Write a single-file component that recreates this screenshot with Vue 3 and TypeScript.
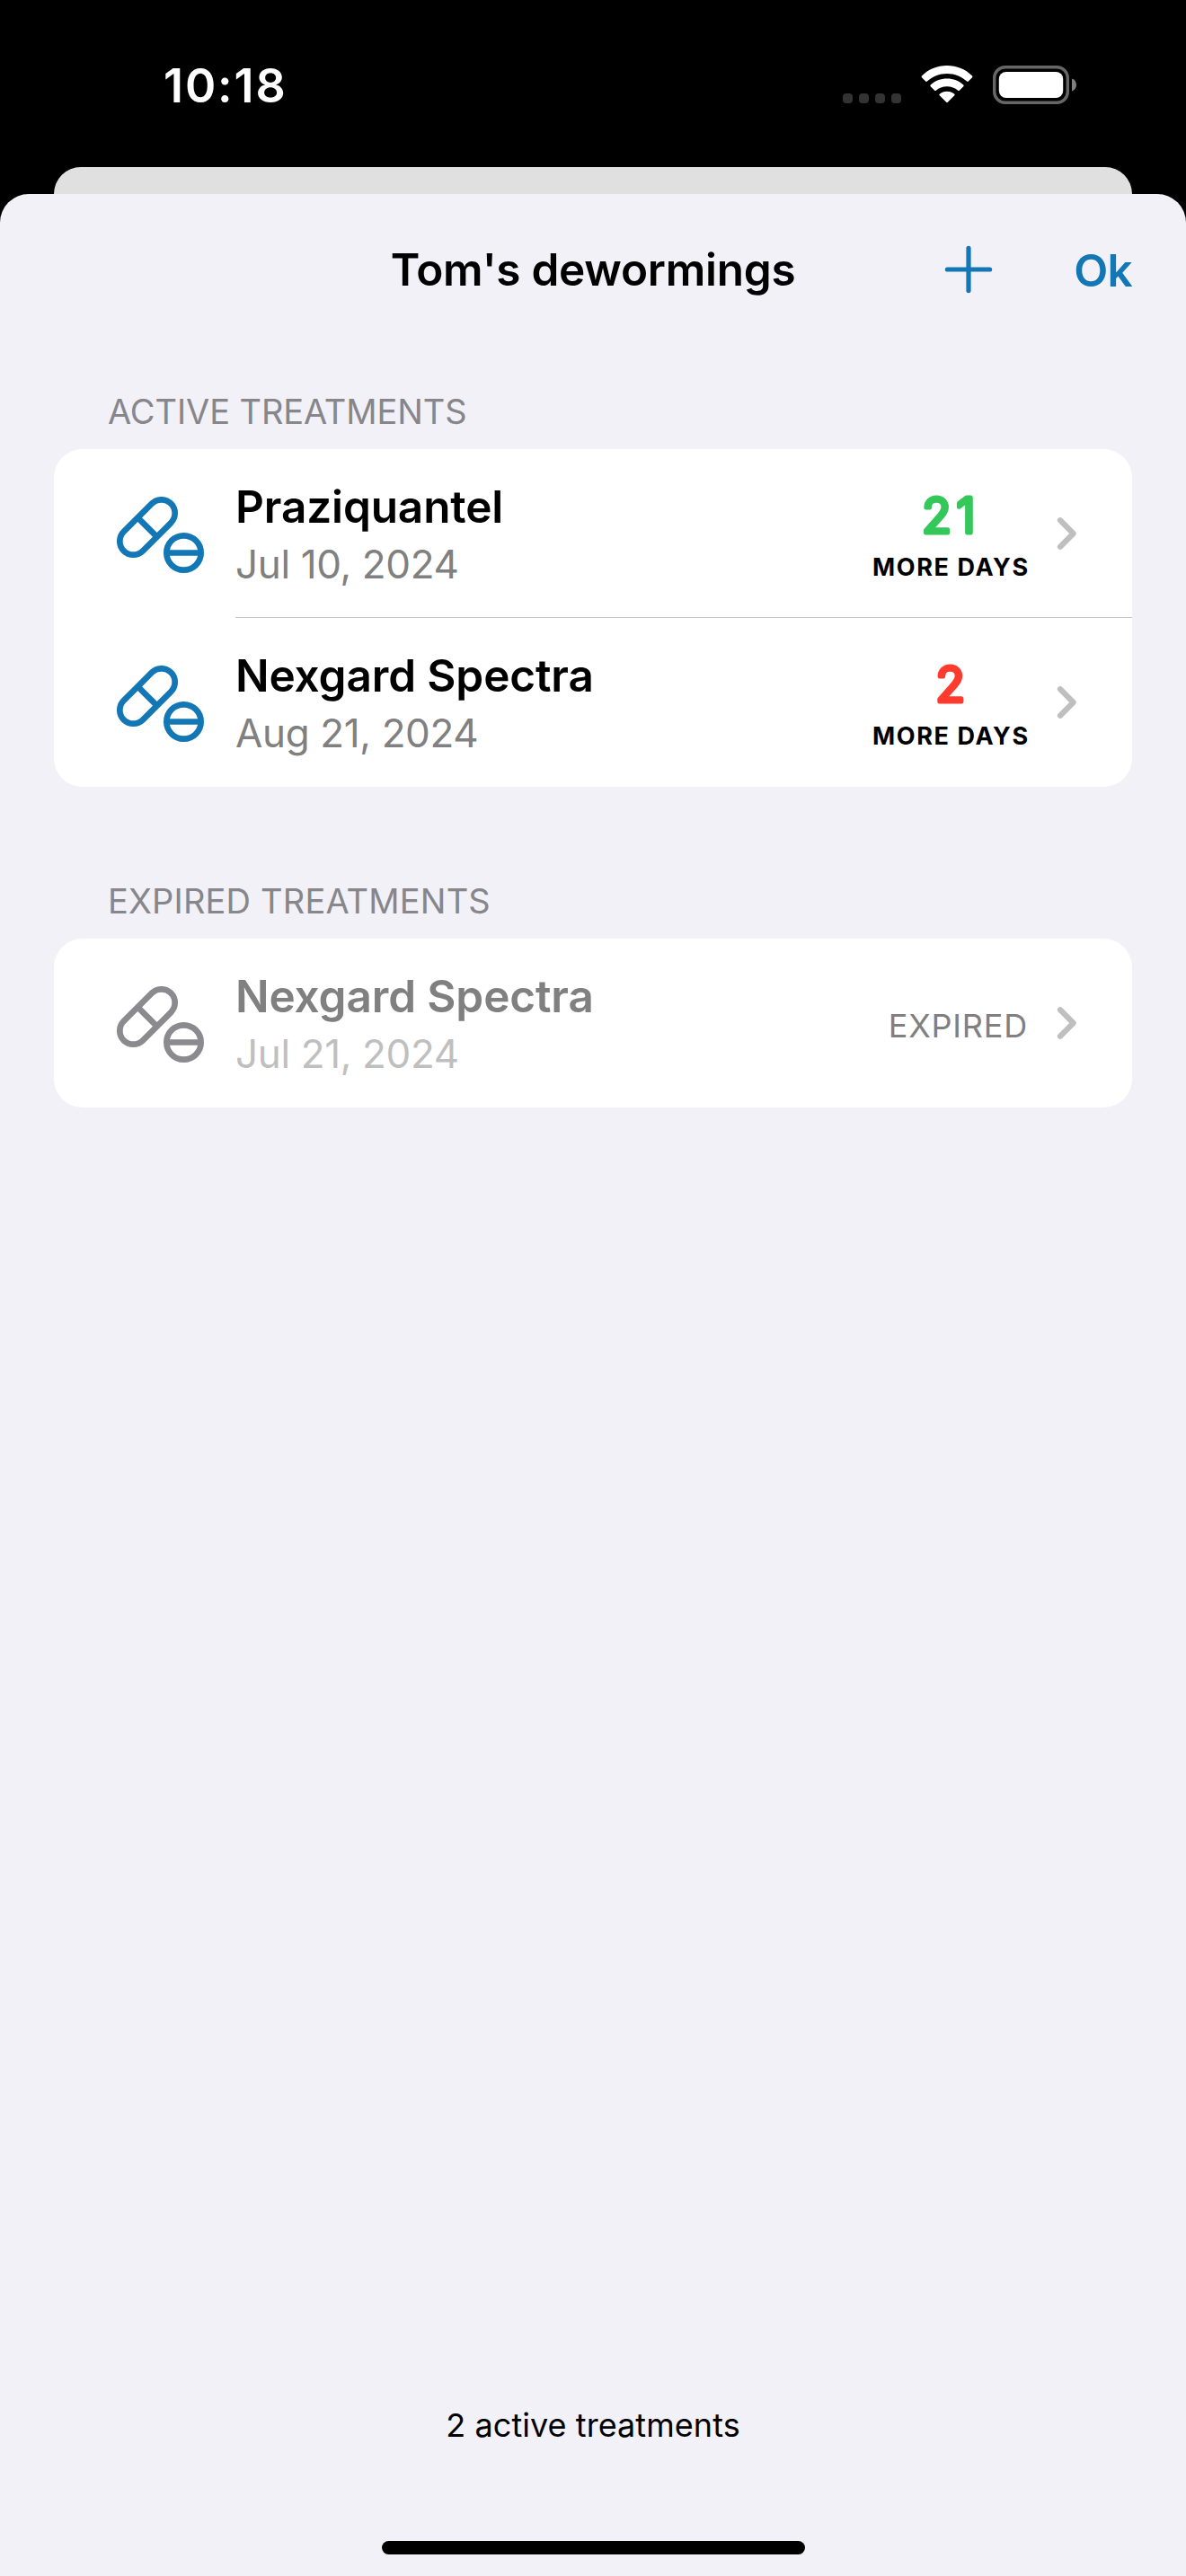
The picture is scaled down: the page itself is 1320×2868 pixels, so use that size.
<script setup lang="ts">
interface Treatment {
  name: string
  date: string
  daysLeft?: number
  tone?: 'calm' | 'urgent'
}

interface Section {
  key: string
  title: string
  items: Treatment[]
}

const sections: Section[] = [
  {
    key: 'active',
    title: 'ACTIVE TREATMENTS',
    items: [
      { name: 'Praziquantel', date: 'Jul 10, 2024', daysLeft: 21, tone: 'calm' },
      { name: 'Nexgard Spectra', date: 'Aug 21, 2024', daysLeft: 2, tone: 'urgent' },
    ],
  },
  {
    key: 'expired',
    title: 'EXPIRED TREATMENTS',
    items: [{ name: 'Nexgard Spectra', date: 'Jul 21, 2024' }],
  },
]

// Per-digit x positions inside the 172px wide counter.
const digitX = (days: number): string => (days > 9 ? '54.2 92.5' : '69.5')
</script>

<template>
  <div class="screen">
    <header class="status">
      <span class="time">10:18</span>
      <div class="indicators">
        <div class="dots"><i v-for="n in 4" :key="n" /></div>
        <svg class="wifi" width="58" height="43" viewBox="0 0 58 43">
          <path
            fill="#fff"
            d="M.9 13.2a1.2 1.2 0 0 1 0-1.6C8.2 4.2 18.2.1 29 .1s20.8 4.1 28.1 11.5a1.2 1.2 0 0 1 0 1.6l-4.3 4.3a1.2 1.2 0 0 1-1.7 0C45.3 12 37.5 8.9 29 8.9S12.700 12 6.900 17.500a1.200 1.200 0 0 1-1.700 0z"
          />
          <path
            fill="#fff"
            d="M10.700 23.200a1.100 1.100 0 0 1 0-1.600C15.500 17.100 22 14.500 29 14.500s13.500 2.600 18.300 7.100a1.100 1.100 0 0 1 0 1.600l-4.500 4.500a1.200 1.200 0 0 1-1.600 0C38 24.900 33.700 23.200 29 23.200s-9 1.700-12.200 4.500a1.200 1.200 0 0 1-1.600 0z"
          />
          <path
            fill="#fff"
            d="M20.700 33.300a1.100 1.100 0 0 1 0-1.600C22.900 29.800 25.800 28.700 29 28.700s6.100 1.100 8.300 3a1.100 1.100 0 0 1 0 1.600l-7.500 7.500a1.200 1.200 0 0 1-1.600 0z"
          />
        </svg>
        <svg class="battery" width="94" height="43" viewBox="0 0 94 43">
          <rect x="1.700" y="1.700" width="81.600" height="39.600" rx="12" fill="none" stroke="#666" stroke-width="3.400" />
          <rect x="6.800" y="7" width="71.400" height="29" rx="8" fill="#fff" />
          <path fill="#808080" d="M88 14.500c3 .9 5 3.700 5 7s-2 6.100-5 7z" />
        </svg>
      </div>
    </header>

    <div class="behind" />

    <main class="sheet">
      <nav class="nav">
        <h1>Tom's dewormings</h1>
        <div class="actions">
          <svg width="54" height="54" viewBox="0 0 54 54">
            <path d="M27 3.400v47.200M3.400 27h47.200" stroke="#1277b4" stroke-width="5.200" stroke-linecap="round" />
          </svg>
          <span class="done">Ok</span>
        </div>
      </nav>

      <section v-for="s in sections" :key="s.key" :class="['group', s.key]">
        <h2>{{ s.title }}</h2>
        <div class="card">
          <div v-for="t in s.items" :key="t.date" class="row">
            <svg class="pills" width="98" height="86" viewBox="0 0 98 86" fill="none" stroke-width="6.700">
              <g transform="translate(34 34) rotate(-45)">
                <rect x="-37.150" y="-15.050" width="74.300" height="30.100" rx="15.050" />
                <path d="M0-15v30" />
              </g>
              <circle cx="74.500" cy="62.500" r="19.150" />
              <path d="M56 62.500h37" />
            </svg>
            <div class="body">
              <div class="info">
                <div class="name">{{ t.name }}</div>
                <div class="date">{{ t.date }}</div>
              </div>
              <div v-if="t.daysLeft" class="days">
                <svg :class="['count', t.tone]" width="172" height="76">
                  <text :x="digitX(t.daysLeft)" y="58">{{ t.daysLeft }}</text>
                </svg>
                <span>MORE DAYS</span>
              </div>
              <div v-else class="over">EXPIRED</div>
              <svg class="chevron" width="24" height="38" viewBox="0 0 24 38">
                <path
                  d="M4 4.200 18.600 19 4 33.800"
                  fill="none"
                  stroke="#bfbfbf"
                  stroke-width="6.200"
                  stroke-linecap="round"
                  stroke-linejoin="round"
                />
              </svg>
            </div>
          </div>
        </div>
      </section>

      <footer>
        <p>2 active treatments</p>
        <div class="home" />
      </footer>
    </main>
  </div>
</template>

<style>
body {
  background: #000;
}
</style>

<style scoped>
.screen {
  width: 1320px;
  height: 2868px;
  display: flex;
  flex-direction: column;
  overflow: hidden;
  background: #000;
  color: #000;
  font-family: Inter, 'Liberation Sans', sans-serif;
}
h1,
h2,
p {
  margin: 0;
}
svg {
  display: block;
  flex: none;
}

.status {
  height: 186px;
  flex: none;
  display: flex;
  justify-content: space-between;
  align-items: flex-start;
  padding: 0 121px 0 182px;
  box-sizing: border-box;
}
.time {
  margin-top: 66px;
  line-height: 60px;
  font-size: 52px;
  font-weight: 600;
  letter-spacing: 1.9px;
  color: #fff;
}
.indicators {
  display: flex;
  padding-top: 73px;
}
.dots {
  display: flex;
  gap: 7px;
  padding-top: 31px;
  margin-right: 22px;
}
.dots i {
  width: 11px;
  height: 11px;
  border-radius: 4px;
  background: #333;
}
.battery {
  margin-left: 22px;
}

.behind {
  height: 30px;
  flex: none;
  margin: 0 60px;
  border-radius: 30px 30px 0 0;
  background: #e0e0e0;
}
.sheet {
  flex: 1;
  display: flex;
  flex-direction: column;
  border-radius: 32px 32px 0 0;
  background: #f2f1f7;
}

.nav {
  height: 168px;
  display: grid;
  grid-template-columns: 1fr auto 1fr;
  align-items: center;
  padding: 0 60px;
}
h1 {
  grid-column: 2;
  font-size: 49.5px;
  line-height: 60px;
  font-weight: 600;
  letter-spacing: -0.26px;
}
.actions {
  display: flex;
  align-items: center;
  justify-content: flex-end;
  gap: 90px;
}
.done {
  font-size: 49.5px;
  line-height: 60px;
  font-weight: 600;
  letter-spacing: -0.7px;
  margin-top: 2px;
  color: #1277b4;
}

.group {
  padding: 50px 60px 0;
}
.expired {
  padding-top: 103px;
}
h2 {
  height: 48px;
  line-height: 48px;
  margin-bottom: 18px;
  padding-left: 60px;
  font-size: 38px;
  font-weight: 400;
  letter-spacing: -0.1px;
  color: #86868b;
}
.expired h2 {
  letter-spacing: 0.18px;
}
.card {
  border-radius: 32px;
  background: #fff;
  overflow: hidden;
}
.row {
  height: 188px;
  display: flex;
  padding-left: 70px;
}
.pills {
  margin: 53px 34px 0 0;
  stroke: #1277b4;
}
.body {
  flex: 1;
  display: flex;
  padding-right: 60px;
}
.row:not(:last-child) .body {
  box-shadow: inset 0 -1px #c6c6c8;
}
.info {
  flex: 1;
  padding-top: 32px;
}
.name {
  font-size: 49.5px;
  line-height: 64px;
  font-weight: 600;
  letter-spacing: -0.12px;
}
.date {
  font-size: 44px;
  line-height: 64px;
  letter-spacing: -0.36px;
  color: #808080;
}
.days {
  width: 172px;
  padding-top: 35px;
}
.days span {
  display: block;
  margin: 1px 0 0 -1px;
  line-height: 40px;
  font-size: 27px;
  font-weight: 650;
  letter-spacing: 1.6px;
  white-space: nowrap;
}
/* A light weight thickened by a round-joined stroke gives the digits soft ends. */
.count text {
  font-size: 53px;
  font-weight: 300;
  stroke-width: 5px;
  stroke-linejoin: round;
  stroke-linecap: round;
}
.calm text {
  fill: #34c759;
  stroke: #34c759;
}
.urgent text {
  fill: #ff3b30;
  stroke: #ff3b30;
}
.over {
  padding-top: 73px;
  line-height: 48px;
  font-size: 36px;
  letter-spacing: 0.8px;
  color: #808080;
}
.chevron {
  margin: 75px 0 0 32px;
}
.expired .pills {
  stroke: #8a8a8f;
}
.expired .name {
  color: #808080;
}
.expired .date {
  color: #bfbfbf;
}

footer {
  margin-top: auto;
  height: 192px;
  box-sizing: border-box;
  display: flex;
  flex-direction: column;
  align-items: center;
  justify-content: space-between;
  padding-bottom: 24px;
}
footer p {
  line-height: 48px;
  font-size: 36px;
  letter-spacing: 0.06px;
}
.home {
  width: 471px;
  height: 15px;
  margin-left: 1px;
  border-radius: 8px;
  background: #000;
}
</style>
